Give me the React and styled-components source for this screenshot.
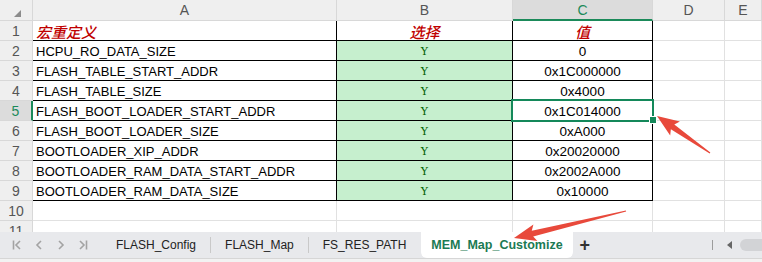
import React from 'react'
import styled, { createGlobalStyle, css } from 'styled-components'

const GlobalStyle = createGlobalStyle`
    html, body {
        margin: 0;
        padding: 0;
        background: #ffffff;
    }
    body {
        font-family: "Liberation Sans", Arial, sans-serif;
    }
`;

const rows = [
    { name: '宏重定义', pick: '选择', value: '值', head: true },
    { name: 'HCPU_RO_DATA_SIZE', pick: 'Y', value: '0' },
    { name: 'FLASH_TABLE_START_ADDR', pick: 'Y', value: '0x1C000000' },
    { name: 'FLASH_TABLE_SIZE', pick: 'Y', value: '0x4000' },
    { name: 'FLASH_BOOT_LOADER_START_ADDR', pick: 'Y', value: '0x1C014000' },
    { name: 'FLASH_BOOT_LOADER_SIZE', pick: 'Y', value: '0xA000' },
    { name: 'BOOTLOADER_XIP_ADDR', pick: 'Y', value: '0x20020000' },
    { name: 'BOOTLOADER_RAM_DATA_START_ADDR', pick: 'Y', value: '0x2002A000' },
    { name: 'BOOTLOADER_RAM_DATA_SIZE', pick: 'Y', value: '0x10000' },
    null,
    null,
];

const columns = ['A', 'B', 'C', 'D', 'E'];
const tabs = ['FLASH_Config', 'FLASH_Map', 'FS_RES_PATH'];

// tapered screenshot-style arrow, tail -> tip
const arrowPoints = (tx, ty, px, py) => {
    const len = Math.hypot(px - tx, py - ty);
    const dx = (px - tx) / len;
    const dy = (py - ty) / len;
    const nx = -dy;
    const ny = dx;
    const head = 19;
    const nkx = px - dx * head;
    const nky = py - dy * head;
    const pt = (x, y, w) => `${x + nx * w},${y + ny * w}`;
    return [
        pt(tx, ty, 0.6),
        pt(nkx, nky, 3),
        pt(nkx - dx * 3, nky - dy * 3, 8.5),
        `${px},${py}`,
        pt(nkx - dx * 3, nky - dy * 3, -8.5),
        pt(nkx, nky, -3),
        pt(tx, ty, -0.6),
    ].join(' ');
};

const App = () => {
    return (
        <Page>
            <GlobalStyle />
            <Sheet>
                <Corner>
                    <CornerMark />
                </Corner>
                {columns.map((c) => (
                    <ColHead key={c} $active={c === 'C'}>{c}</ColHead>
                ))}
                {rows.map((r, i) => {
                    const n = i + 1;
                    const table = !!r;
                    return (
                        <React.Fragment key={n}>
                            <RowHead $active={n === 5}>{n}</RowHead>
                            <Cell $table={table}>
                                {r && (r.head ? <HeadText>{r.name}</HeadText> : r.name)}
                            </Cell>
                            <Cell $table={table} $center $fill={r && !r.head}>
                                {r && (r.head ? <HeadText>{r.pick}</HeadText> : <Flag>{r.pick}</Flag>)}
                            </Cell>
                            <Cell $table={table} $center $value $selected={n === 5}>
                                {r && (r.head ? <HeadText>{r.value}</HeadText> : r.value)}
                            </Cell>
                            <Cell />
                            <Cell />
                        </React.Fragment>
                    );
                })}
            </Sheet>
            <TabBar>
                <Nav>
                    <NavIcon viewBox="0 0 10 12">
                        <path d="M1.5 1.5v9M8 2L4 6l4 4" />
                    </NavIcon>
                    <NavIcon viewBox="0 0 10 12">
                        <path d="M7 2L3 6l4 4" />
                    </NavIcon>
                    <NavIcon viewBox="0 0 10 12">
                        <path d="M3 2l4 4-4 4" />
                    </NavIcon>
                    <NavIcon viewBox="0 0 10 12">
                        <path d="M2 2l4 4-4 4M8.5 1.5v9" />
                    </NavIcon>
                </Nav>
                {tabs.map((t, i) => (
                    <React.Fragment key={t}>
                        <Tab>{t}</Tab>
                        {i < tabs.length - 1 && <Sep />}
                    </React.Fragment>
                ))}
                <ActiveTab>MEM_Map_Customize</ActiveTab>
                <Plus>+</Plus>
                <Scroller>
                    <Sep $dark />
                    <Back />
                    <ScrollThumb />
                </Scroller>
            </TabBar>
            <StatusEdge />
            <Overlay width="762" height="262">
                <polygon points={arrowPoints(710, 153, 657, 116)} fill="#e8493b" />
                <polygon points={arrowPoints(626, 211, 514, 238)} fill="#e8493b" />
            </Overlay>
        </Page>
    )
}

const Page = styled.div`
    position: relative;
    width: 762px;
    height: 262px;
    overflow: hidden;
    display: flex;
    flex-direction: column;
    background: #ffffff;
`;

const Sheet = styled.div`
    display: grid;
    grid-template-columns: 33px 304px 176px 140px 72px 1fr;
    grid-template-rows: 21px repeat(11, 20px);
    height: 232px;
    overflow: hidden;
    flex: none;
`;

const headBase = css`
    box-sizing: border-box;
    background: #efefef;
    color: #555555;
    font-size: 14px;
    display: flex;
    align-items: center;
    justify-content: center;
    border-right: 1px solid #d8d8d8;
    border-bottom: 1px solid #d8d8d8;
`;

const Corner = styled.div`
    ${headBase};
`;

const CornerMark = styled.div`
    width: 0;
    height: 0;
    border-left: 7px solid transparent;
    border-bottom: 7px solid #8c8c8c;
    margin: 6px 0 0 2px;
`;

const ColHead = styled.div`
    ${headBase};
    ${(p) => p.$active && css`
        background: #dcdcdc;
        color: #1b8a5a;
        border-bottom: 2px solid #1b8a5a;
    `}
`;

const RowHead = styled.div`
    ${headBase};
    ${(p) => p.$active && css`
        background: #dcdcdc;
        color: #1b8a5a;
        border-right: 2px solid #1b8a5a;
    `}
`;

const Cell = styled.div`
    position: relative;
    box-sizing: border-box;
    display: flex;
    align-items: center;
    justify-content: ${(p) => (p.$center ? 'center' : 'flex-start')};
    padding: 1px 0 0 ${(p) => (p.$center ? '0' : '3px')};
    font-size: ${(p) => (p.$value ? '13.5px' : '13px')};
    color: #000000;
    white-space: nowrap;
    border-right: 1px solid ${(p) => (p.$table ? '#000000' : '#e1e1e1')};
    border-bottom: 1px solid ${(p) => (p.$table ? '#000000' : '#e1e1e1')};
    background: ${(p) => (p.$fill ? '#c6efce' : '#ffffff')};

    ${(p) => p.$selected && css`
        z-index: 2;
        &::after {
            content: '';
            position: absolute;
            left: -2px;
            top: -2px;
            right: -2px;
            bottom: -2px;
            border: 2px solid #14885a;
        }
        &::before {
            content: '';
            position: absolute;
            right: -5px;
            bottom: -4px;
            width: 6px;
            height: 6px;
            background: #14885a;
            border: 1px solid #ffffff;
            z-index: 3;
        }
    `}
`;

const HeadText = styled.span`
    font-family: "Noto Sans CJK SC", sans-serif;
    font-style: italic;
    font-weight: 500;
    font-size: 15px;
    color: #c00000;
    line-height: 1;
`;

const Flag = styled.span`
    font-family: "DejaVu Serif", "Liberation Serif", serif;
    font-size: 11px;
    color: #006100;
`;

const TabBar = styled.div`
    display: flex;
    align-items: center;
    height: 26px;
    background: #e8e9ec;
    flex: none;
    font-size: 12px;
    color: #222222;
`;

const Nav = styled.div`
    display: flex;
    align-items: center;
    gap: 12px;
    width: 102px;
    flex: none;
    padding-left: 12px;
    box-sizing: border-box;
`;

const NavIcon = styled.svg`
    width: 10px;
    height: 12px;
    fill: none;
    stroke: #a3a3a3;
    stroke-width: 1.6;
`;

const Tab = styled.div`
    padding: 0 14px;
    white-space: nowrap;
    flex: none;
`;

const Sep = styled.div`
    width: 1px;
    height: ${(p) => (p.$dark ? '10px' : '16px')};
    flex: none;
    background: ${(p) => (p.$dark ? '#9c9c9c' : '#c9c9c9')};
`;

const ActiveTab = styled.div`
    align-self: stretch;
    display: flex;
    align-items: center;
    flex: none;
    margin-left: 1px;
    padding: 0 10px;
    background: #ffffff;
    border-radius: 0 0 6px 6px;
    font-weight: bold;
    font-size: 12.5px;
    color: #1b7a53;
    white-space: nowrap;
`;

const Plus = styled.div`
    margin-left: 7px;
    font-size: 18px;
    font-weight: bold;
    color: #333333;
`;

const Scroller = styled.div`
    margin-left: auto;
    width: 50px;
    flex: none;
    display: flex;
    align-items: center;
    overflow: hidden;
`;

const Back = styled.div`
    width: 0;
    height: 0;
    flex: none;
    margin-left: 14px;
    border-top: 4px solid transparent;
    border-bottom: 4px solid transparent;
    border-right: 5px solid #666666;
`;

const ScrollThumb = styled.div`
    width: 40px;
    height: 12px;
    flex: none;
    margin-left: 8px;
    border-radius: 6px;
    background: #d2d3d6;
`;

const StatusEdge = styled.div`
    flex: 1;
    background: #f2f2f2;
    border-top: 1px solid #d6d6d6;
`;

const Overlay = styled.svg`
    position: absolute;
    left: 0;
    top: 0;
    pointer-events: none;
`;

export default App
